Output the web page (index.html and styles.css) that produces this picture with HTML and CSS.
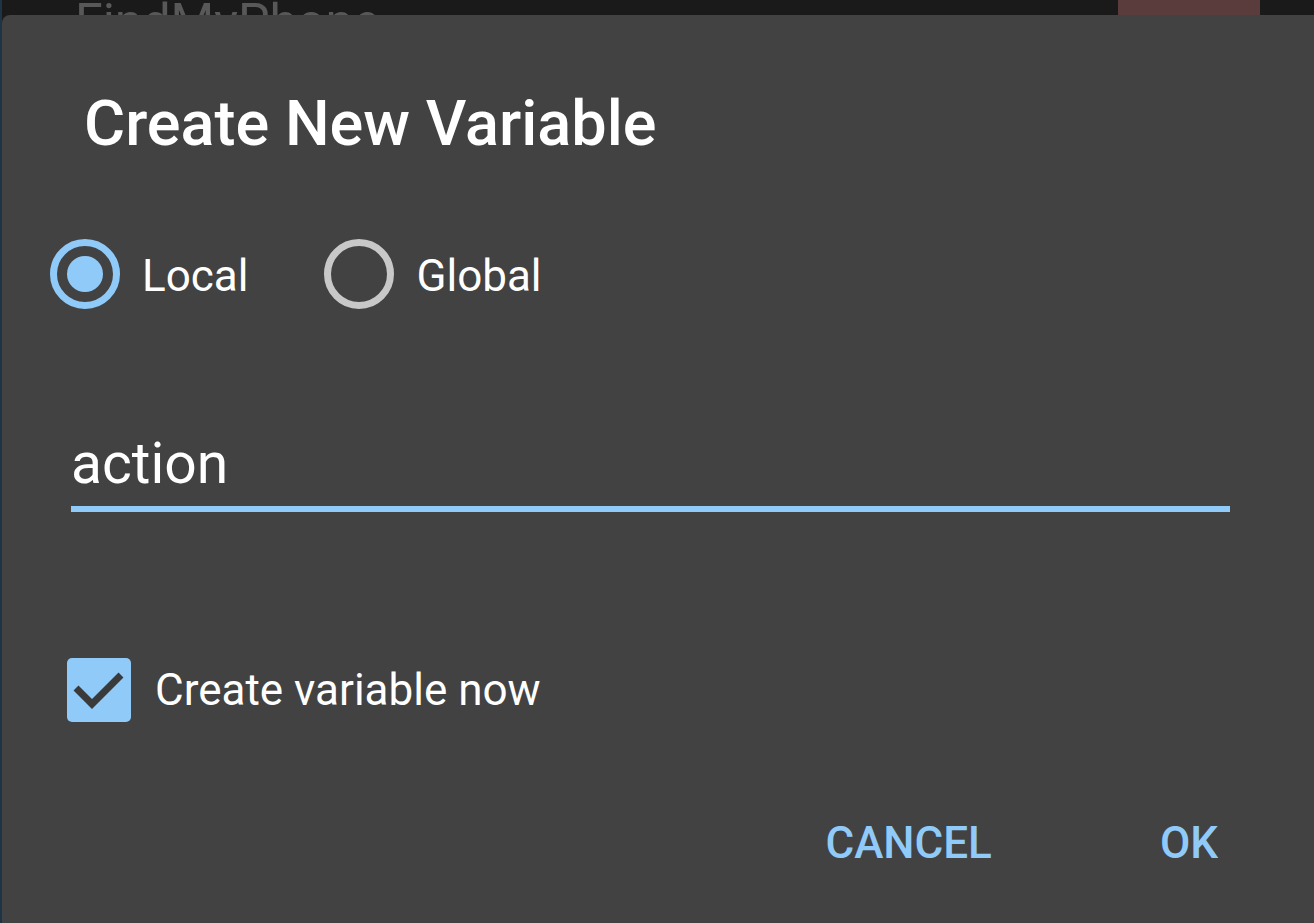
FILE: index.html
```html
<!DOCTYPE html>
<html>
<head>
<meta charset="utf-8">
<link rel="stylesheet" href="styles.css">
</head>
<body>
<div class="app">
  <div class="appbar">
    <span class="app-title">FindMyPhone</span>
    <span class="app-action"></span>
  </div>
</div>
<div class="dialog">
  <h1 class="dialog-title">Create New Variable</h1>
  <div class="radios">
    <label class="radio checked"><span class="radio-circle"><span class="radio-dot"></span></span><span class="radio-label">Local</span></label>
    <label class="radio"><span class="radio-circle"></span><span class="radio-label">Global</span></label>
  </div>
  <div class="field">
    <div class="field-value">action</div>
    <div class="field-line"></div>
  </div>
  <label class="check">
    <span class="check-box">
      <svg width="64" height="64" viewBox="0 0 64 64"><path d="M9 30 L25 46 L54 17" fill="none" stroke="#3a3a3a" stroke-width="7"/></svg>
    </span>
    <span class="check-label">Create variable now</span>
  </label>
  <div class="actions">
    <span class="btn">CANCEL</span>
    <span class="btn ok">OK</span>
  </div>
</div>
</body>
</html>
```
FILE: styles.css
```css
html, body {
  margin: 0;
  padding: 0;
  height: 100%;
  overflow: hidden;
}
body {
  background: #1a1a1a;
  font-family: Roboto, "Noto Sans", sans-serif;
  position: relative;
}
.app {
  height: 100%;
  border-left: 2px solid #1d3446;
  box-sizing: border-box;
}
.appbar {
  height: 80px;
  display: flex;
  align-items: flex-start;
  padding-left: 73px;
  position: relative;
}
.app-title {
  font-size: 50px;
  color: #585858;
  line-height: 50px;
  margin-top: -3px;
}
.app-action {
  position: absolute;
  left: 1116px;
  top: 0;
  width: 142px;
  height: 20px;
  background: #5b3c3c;
}
.dialog {
  position: absolute;
  left: 2px;
  top: 15px;
  right: -10px;
  bottom: -10px;
  background: #424242;
  border-radius: 8px 0 0 0;
  color: #ffffff;
}
.dialog-title {
  margin: 0;
  font-size: 63px;
  font-weight: 500;
  line-height: 74px;
  padding: 72px 0 0 82px;
}
.radios {
  display: flex;
  align-items: center;
  margin-top: 78px;
  padding-left: 48px;
  gap: 76px;
}
.radio {
  display: flex;
  align-items: center;
  gap: 22px;
}
.radio-circle {
  width: 56px;
  height: 56px;
  border: 7px solid #c8c8c8;
  border-radius: 50%;
  display: flex;
  align-items: center;
  justify-content: center;
}
.checked .radio-circle {
  border-color: #90caf9;
}
.radio-dot {
  width: 36px;
  height: 36px;
  border-radius: 50%;
  background: #90caf9;
}
.radio-label {
  font-size: 44px;
  line-height: 60px;
  padding-top: 3px;
}
.field {
  padding: 122px 94px 0 69px;
}
.field-value {
  font-size: 57px;
  line-height: 66px;
}
.field-line {
  margin-top: 9px;
  height: 6px;
  background: #90caf9;
}
.check {
  display: flex;
  align-items: center;
  padding: 146px 0 0 65px;
  gap: 24px;
}
.check-box {
  width: 64px;
  height: 64px;
  border-radius: 5px;
  background: #90caf9;
  display: block;
}
.check-box svg {
  display: block;
}
.check-label {
  font-size: 44px;
  line-height: 60px;
}
.actions {
  display: flex;
  justify-content: flex-end;
  padding: 95px 106px 0 0;
  gap: 168px;
}
.btn {
  color: #90caf9;
  font-size: 44px;
  font-weight: 500;
  line-height: 52px;
}
```
